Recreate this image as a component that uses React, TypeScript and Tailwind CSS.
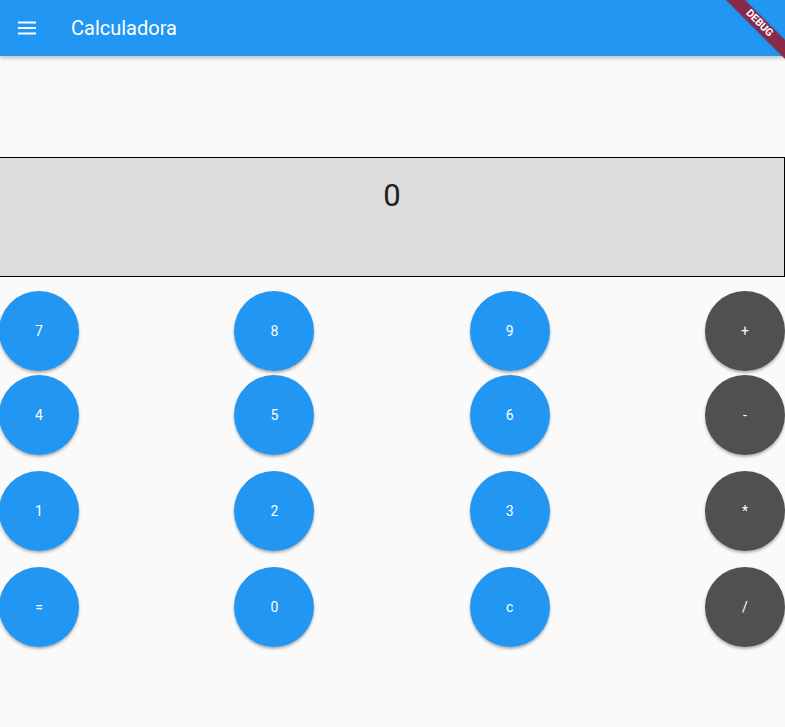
const rows: { label: string; dark?: boolean }[][] = [
  [{ label: '7' }, { label: '8' }, { label: '9' }, { label: '+', dark: true }],
  [{ label: '4' }, { label: '5' }, { label: '6' }, { label: '-', dark: true }],
  [{ label: '1' }, { label: '2' }, { label: '3' }, { label: '*', dark: true }],
  [{ label: '=' }, { label: '0' }, { label: 'c' }, { label: '/', dark: true }],
];

function CalcButton({ label, dark }: { label: string; dark?: boolean }) {
  return (
    <button
      className={
        dark
          ? 'w-20 h-20 rounded-full bg-[#505050] text-white text-sm flex items-center justify-center shadow-[0_2px_3px_rgba(0,0,0,0.3)]'
          : 'w-20 h-20 rounded-full bg-[#2196f3] text-white text-sm flex items-center justify-center shadow-[0_2px_3px_rgba(0,0,0,0.3)]'
      }
    >
      {label}
    </button>
  );
}

export default function App() {
  return (
    <div className="relative w-[785px] h-[727px] bg-[#fafafa] overflow-hidden font-['Roboto',sans-serif]">
      {/* App bar */}
      <header className="relative z-10 h-14 bg-[#2196f3] flex items-center shadow-[0_2px_4px_rgba(0,0,0,0.25)]">
        <div className="w-14 flex justify-center">
          <svg width="24" height="24" viewBox="0 0 24 24" className="ml-[-2px]" fill="white">
            <rect x="3" y="5.5" width="18" height="2" />
            <rect x="3" y="11" width="18" height="2" />
            <rect x="3" y="16.5" width="18" height="2" />
          </svg>
        </div>
        <h1 className="ml-[15px] text-white text-xl font-normal">Calculadora</h1>
      </header>

      {/* Debug banner */}
      <div className="absolute top-[17px] right-[-34px] w-[120px] h-[13px] rotate-45 bg-[#8a2a4b] z-20 flex items-center justify-center shadow-[0_0_2px_rgba(0,0,0,0.3)]">
        <span className="text-white text-[10.5px] font-bold leading-none">DEBUG</span>
      </div>

      {/* Display */}
      <div className="mt-[101px] ml-[-1px] h-[120px] border border-black bg-[#dddddd] flex justify-center pt-[20px]">
        <span className="text-[31px] leading-[36px] text-[#212121]">0</span>
      </div>

      {/* Keypad */}
      <div className="mt-[14px] ml-[-1px] flex flex-col">
        {rows.map((row, i) => (
          <div
            key={i}
            className={i === 0 ? 'flex justify-between' : i === 1 ? 'flex justify-between mt-1' : 'flex justify-between mt-4'}
          >
            {row.map((b) => (
              <CalcButton key={b.label} label={b.label} dark={b.dark} />
            ))}
          </div>
        ))}
      </div>
    </div>
  );
}
